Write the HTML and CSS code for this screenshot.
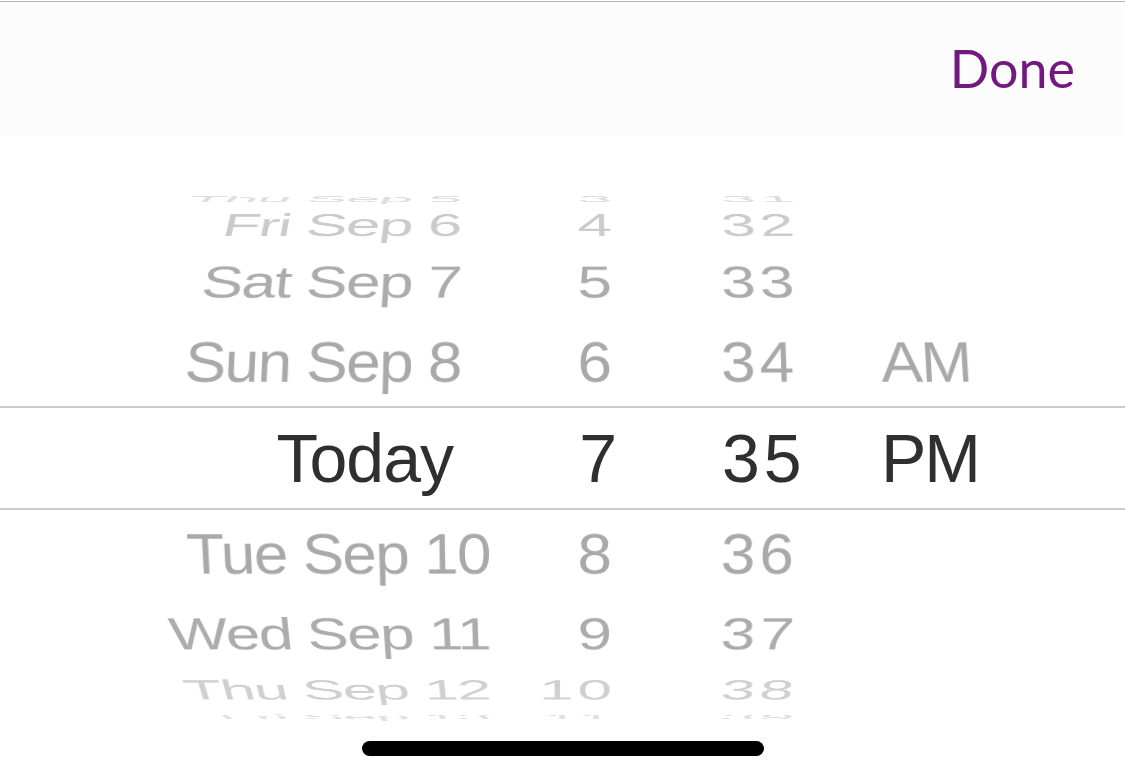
FILE: index.html
```html
<!DOCTYPE html>
<html lang="en">
<head>
<meta charset="utf-8">
<title>Date picker</title>
<link rel="stylesheet" href="styles.css">
</head>
<body>
<div class="screen">
  <header class="toolbar">
    <button class="done" type="button">Done</button>
  </header>
  <div class="picker">
    <div class="wheel">
      <div class="row u4"><span class="c-date">Thu Sep 5</span><span class="c-hour">3</span><span class="c-min">31</span><span class="c-ampm"></span></div>
      <div class="row u3"><span class="c-date">Fri Sep 6</span><span class="c-hour">4</span><span class="c-min">32</span><span class="c-ampm"></span></div>
      <div class="row u2"><span class="c-date">Sat Sep 7</span><span class="c-hour">5</span><span class="c-min">33</span><span class="c-ampm"></span></div>
      <div class="row u1"><span class="c-date">Sun Sep 8</span><span class="c-hour">6</span><span class="c-min">34</span><span class="c-ampm">AM</span></div>
      <div class="row sel"><span class="c-date">Today</span><span class="c-hour">7</span><span class="c-min">35</span><span class="c-ampm">PM</span></div>
      <div class="row d1"><span class="c-date">Tue Sep 10</span><span class="c-hour">8</span><span class="c-min">36</span><span class="c-ampm"></span></div>
      <div class="row d2"><span class="c-date">Wed Sep 11</span><span class="c-hour">9</span><span class="c-min">37</span><span class="c-ampm"></span></div>
      <div class="row d3"><span class="c-date">Thu Sep 12</span><span class="c-hour">10</span><span class="c-min">38</span><span class="c-ampm"></span></div>
      <div class="row d4"><span class="c-date">Fri Sep 13</span><span class="c-hour">11</span><span class="c-min">39</span><span class="c-ampm"></span></div>
    </div>
  </div>
  <div class="home-area">
    <div class="home-indicator"></div>
  </div>
</div>
</body>
</html>
```
FILE: styles.css
```css
* {
  box-sizing: border-box;
  margin: 0;
  padding: 0;
}

html, body {
  width: 1125px;
  height: 782px;
  overflow: hidden;
  background: #ffffff;
}

body {
  font-family: "Liberation Sans", Arial, sans-serif;
}

.screen {
  display: flex;
  flex-direction: column;
  height: 782px;
  padding-top: 1px;
}

.toolbar {
  height: 135px;
  flex: none;
  background: #fcfcfc;
  border-top: 1px solid #b3b3b3;
  display: flex;
  align-items: center;
  justify-content: flex-end;
  padding-right: 50px;
}

.done {
  font-family: Lato, "Open Sans", sans-serif;
  font-size: 52px;
  font-weight: 400;
  color: #71197f;
  background: none;
  border: none;
  line-height: 1;
  margin-top: -2px;
}

.picker {
  height: 599px;
  flex: none;
  overflow: hidden;
  padding-top: 58px;
}

.wheel {
  display: flex;
  flex-direction: column;
  perspective: 2200px;
  perspective-origin: 50% 50%;
}

.row {
  display: grid;
  grid-template-columns: 490px 135px 256px 1fr;
  font-size: 62px;
  white-space: nowrap;
}

.row > span {
  display: block;
  line-height: inherit;
}

.c-date {
  text-align: right;
  padding-right: 29px;
  letter-spacing: -1.5px;
}

.c-hour {
  text-align: right;
  padding-right: 9px;
  letter-spacing: 4px;
}

.c-min {
  padding-left: 96px;
  letter-spacing: 4px;
}

.c-ampm {
  letter-spacing: -1.5px;
}

.u4 { height: 10px; line-height: 10px; transform: rotateX(75deg); color: #dedede; }
.u3 { height: 42px; line-height: 42px; transform: rotateX(53deg); color: #cbcbcb; }
.u2 { height: 72px; line-height: 72px; transform: rotateX(38deg); color: #acacac; }
.u1 { height: 88px; line-height: 88px; transform: rotateX(18deg); color: #a9a9a9; }
.d1 { height: 88px; line-height: 88px; transform: rotateX(-18deg); color: #a9a9a9; }
.d2 { height: 72px; line-height: 72px; transform: rotateX(-38deg); color: #acacac; }
.d3 { height: 40px; line-height: 40px; transform: rotateX(-57deg); color: #d0d0d0; }
.d4 { height: 14px; line-height: 14px; transform: rotateX(-77deg); color: #e0e0e0; }

.d1 .c-date, .d2 .c-date, .d3 .c-date, .d4 .c-date {
  padding-right: 0;
}

.sel {
  height: 104px;
  line-height: 100px;
  font-size: 68px;
  color: #2f2f2f;
  border-top: 2px solid #cbcbcb;
  border-bottom: 2px solid #cbcbcb;
}

.sel .c-date {
  padding-right: 37px;
  letter-spacing: -1px;
}

.sel .c-hour {
  padding-right: 4px;
}

.sel .c-min {
  padding-left: 97px;
}

.sel .c-ampm {
  letter-spacing: -2px;
}

.home-area {
  flex: 1;
  display: flex;
  justify-content: center;
  padding-top: 6px;
}

.home-indicator {
  width: 402px;
  height: 15px;
  border-radius: 8px;
  background: #000000;
}
```
